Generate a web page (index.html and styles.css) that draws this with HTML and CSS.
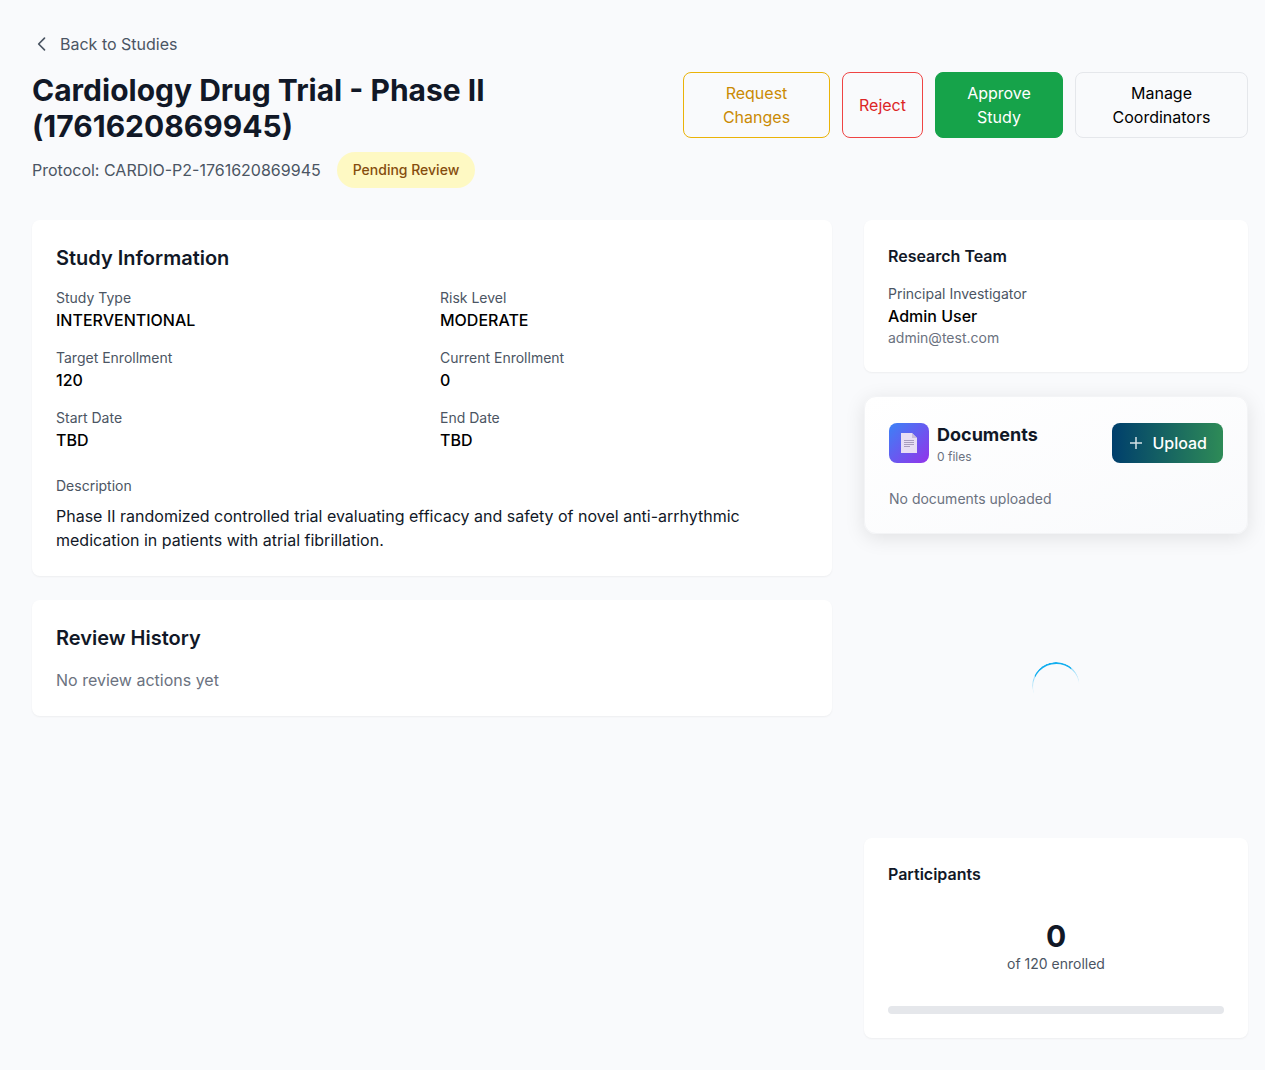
FILE: index.html
```html
<!DOCTYPE html>
<html lang="en">
<head>
<meta charset="utf-8">
<meta name="viewport" content="width=device-width, initial-scale=1">
<title>Cardiology Drug Trial - Phase II</title>
<link rel="stylesheet" href="styles.css">
</head>
<body>
<main class="page">
  <a class="back" href="#">
    <svg width="20" height="20" viewBox="0 0 24 24" fill="none" stroke="currentColor" stroke-width="2" stroke-linecap="round" stroke-linejoin="round" aria-hidden="true"><path d="M15 19l-7-7 7-7"/></svg>
    Back to Studies
  </a>

  <header class="header">
    <div class="heading">
      <h1 class="title">Cardiology Drug Trial - Phase II (1761620869945)</h1>
      <div class="meta">
        <span>Protocol: CARDIO-P2-1761620869945</span>
        <span class="badge">Pending Review</span>
      </div>
    </div>
    <div class="actions">
      <button class="btn btn-warning" type="button">Request Changes</button>
      <button class="btn btn-danger" type="button">Reject</button>
      <button class="btn btn-success" type="button">Approve Study</button>
      <button class="btn" type="button">Manage Coordinators</button>
    </div>
  </header>

  <div class="columns">
    <div class="column">
      <section class="card">
        <h2 class="card-title">Study Information</h2>
        <dl class="facts">
          <div><dt>Study Type</dt><dd>INTERVENTIONAL</dd></div>
          <div><dt>Risk Level</dt><dd>MODERATE</dd></div>
          <div><dt>Target Enrollment</dt><dd>120</dd></div>
          <div><dt>Current Enrollment</dt><dd>0</dd></div>
          <div><dt>Start Date</dt><dd>TBD</dd></div>
          <div><dt>End Date</dt><dd>TBD</dd></div>
        </dl>
        <div class="description">
          <h3 class="label">Description</h3>
          <p class="description-text">Phase II randomized controlled trial evaluating efficacy and safety of novel anti-arrhythmic medication in patients with atrial fibrillation.</p>
        </div>
      </section>
      <section class="card">
        <h2 class="card-title">Review History</h2>
        <p class="empty">No review actions yet</p>
      </section>
    </div>

    <aside class="column">
      <section class="card">
        <h2 class="side-title">Research Team</h2>
        <p class="label">Principal Investigator</p>
        <p class="name">Admin User</p>
        <p class="small-muted">admin@test.com</p>
      </section>

      <section class="card documents">
        <div class="documents-head">
          <div class="documents-id">
            <span class="documents-icon">
              <svg width="16" height="20" viewBox="0 0 16 20" aria-hidden="true">
                <path d="M0 0H11L16 5V20H0Z" fill="#e8def4"/>
                <path d="M11 0V5H16Z" fill="#c9bcdc"/>
                <path d="M3 7.5H13M3 9.5H13M3 11.5H13M3 13.5H9" stroke="#a99dbd" stroke-width="1"/>
              </svg>
            </span>
            <div>
              <h2 class="documents-title">Documents</h2>
              <p class="documents-count">0 files</p>
            </div>
          </div>
          <button class="upload" type="button">
            <svg width="16" height="16" viewBox="0 0 16 16" fill="none" stroke="#d5e2e6" stroke-width="1.5" aria-hidden="true"><path d="M8 2v12M2 8h12"/></svg>
            Upload
          </button>
        </div>
        <p class="small-muted">No documents uploaded</p>
      </section>

      <div class="loading" role="status" aria-label="Loading"><span class="spinner"></span></div>

      <section class="card">
        <h2 class="side-title">Participants</h2>
        <div class="enrolled">
          <p class="enrolled-count">0</p>
          <p class="label">of 120 enrolled</p>
        </div>
        <div class="progress" role="progressbar" aria-label="Enrollment" aria-valuemin="0" aria-valuemax="120" aria-valuenow="0"></div>
      </section>
    </aside>
  </div>
</main>
</body>
</html>
```
FILE: styles.css
```css
* {
  box-sizing: border-box;
  margin: 0;
  padding: 0;
}

body {
  background: #f9fafc;
  color: #000;
  font-family: Inter, "Liberation Sans", sans-serif;
  font-size: 16px;
  line-height: 24px;
}

button {
  font: inherit;
  cursor: pointer;
}

.page {
  padding: 32px 17px 32px 32px;
}

.back {
  display: flex;
  align-items: center;
  gap: 8px;
  width: fit-content;
  margin-bottom: 16px;
  color: #4b5563;
  text-decoration: none;
}

.header {
  display: flex;
  align-items: flex-start;
  justify-content: space-between;
  gap: 24px;
  margin-bottom: 32px;
}

.heading {
  flex: 0 1 512px;
}

.title {
  margin-bottom: 8px;
  color: #111827;
  font-size: 30px;
  font-weight: 700;
  line-height: 36px;
}

.meta {
  display: flex;
  align-items: center;
  gap: 16px;
  color: #4b5563;
}

.badge {
  padding: 8px 16px;
  border-radius: 18px;
  background: #fef9c3;
  color: #854d0e;
  font-size: 14px;
  font-weight: 500;
  line-height: 20px;
}

.actions {
  display: grid;
  grid-template-columns: 147px 81px 128px 173px;
  gap: 12px;
}

.btn {
  padding: 8px 16px;
  border: 1px solid #e5e7eb;
  border-radius: 8px;
  background: transparent;
  color: #000;
}

.btn-warning {
  border-color: #eab308;
  color: #ca8a04;
}

.btn-danger {
  border-color: #ef4444;
  color: #dc2626;
}

.btn-success {
  border-color: #16a34a;
  background: #16a34a;
  color: #fff;
}

.columns {
  display: grid;
  grid-template-columns: repeat(3, minmax(0, 1fr));
  align-items: start;
  gap: 32px;
}

.column {
  display: flex;
  flex-direction: column;
  gap: 24px;
}

.column:first-child {
  grid-column: span 2;
}

.card {
  padding: 24px;
  border-radius: 8px;
  background: #fff;
  box-shadow: 0 1px 2px rgba(0, 0, 0, 0.05);
}

.card-title {
  margin-bottom: 16px;
  color: #111827;
  font-size: 20px;
  font-weight: 600;
  line-height: 28px;
}

.side-title {
  margin-bottom: 16px;
  color: #111827;
  font-size: 16px;
  font-weight: 600;
}

.facts {
  display: grid;
  grid-template-columns: 1fr 1fr;
  gap: 16px;
}

.facts dt,
.label {
  color: #4b5563;
  font-size: 14px;
  font-weight: 400;
  line-height: 20px;
}

.facts dd,
.name {
  font-weight: 500;
}

.description {
  margin-top: 24px;
}

.description-text {
  margin-top: 8px;
  color: #111827;
}

.empty {
  color: #6b7280;
}

.small-muted {
  color: #6b7280;
  font-size: 14px;
  line-height: 20px;
}

.documents {
  border: 1px solid #f3f4f6;
  border-radius: 12px;
  background: linear-gradient(to bottom right, #fff, #f9fafc);
  box-shadow: 0 4px 20px rgba(0, 0, 0, 0.1);
}

.documents-head {
  display: flex;
  align-items: center;
  justify-content: space-between;
  margin-bottom: 24px;
}

.documents-id {
  display: flex;
  align-items: center;
  gap: 8px;
}

.documents-icon {
  display: flex;
  align-items: center;
  justify-content: center;
  width: 40px;
  height: 40px;
  border-radius: 8px;
  background: linear-gradient(to bottom right, #3b82f6, #9333ea);
}

.documents-title {
  color: #111827;
  font-size: 18px;
  font-weight: 700;
  line-height: 28px;
}

.documents-count {
  color: #6b7280;
  font-size: 12px;
  line-height: 16px;
}

.upload {
  display: flex;
  align-items: center;
  gap: 8px;
  padding: 8px 16px;
  border: 0;
  border-radius: 8px;
  background: linear-gradient(to right, #003f6c, #2e8b57);
  color: #fff;
  font-weight: 500;
}

.loading {
  display: flex;
  align-items: center;
  justify-content: center;
  height: 256px;
}

.spinner {
  width: 48px;
  height: 48px;
  border: 2px solid transparent;
  border-width: 2px 1px 0;
  border-color: #12aeef #a5e0f9 transparent;
  border-radius: 50%;
  transform: rotate(-12deg);
  mask-image: linear-gradient(#000 30%, transparent 56%);
}

.enrolled {
  padding: 16px 0;
  text-align: center;
}

.enrolled-count {
  color: #111827;
  font-size: 30px;
  font-weight: 700;
  line-height: 36px;
}

.progress {
  height: 8px;
  margin-top: 16px;
  border-radius: 4px;
  background: #e5e7eb;
}
```
